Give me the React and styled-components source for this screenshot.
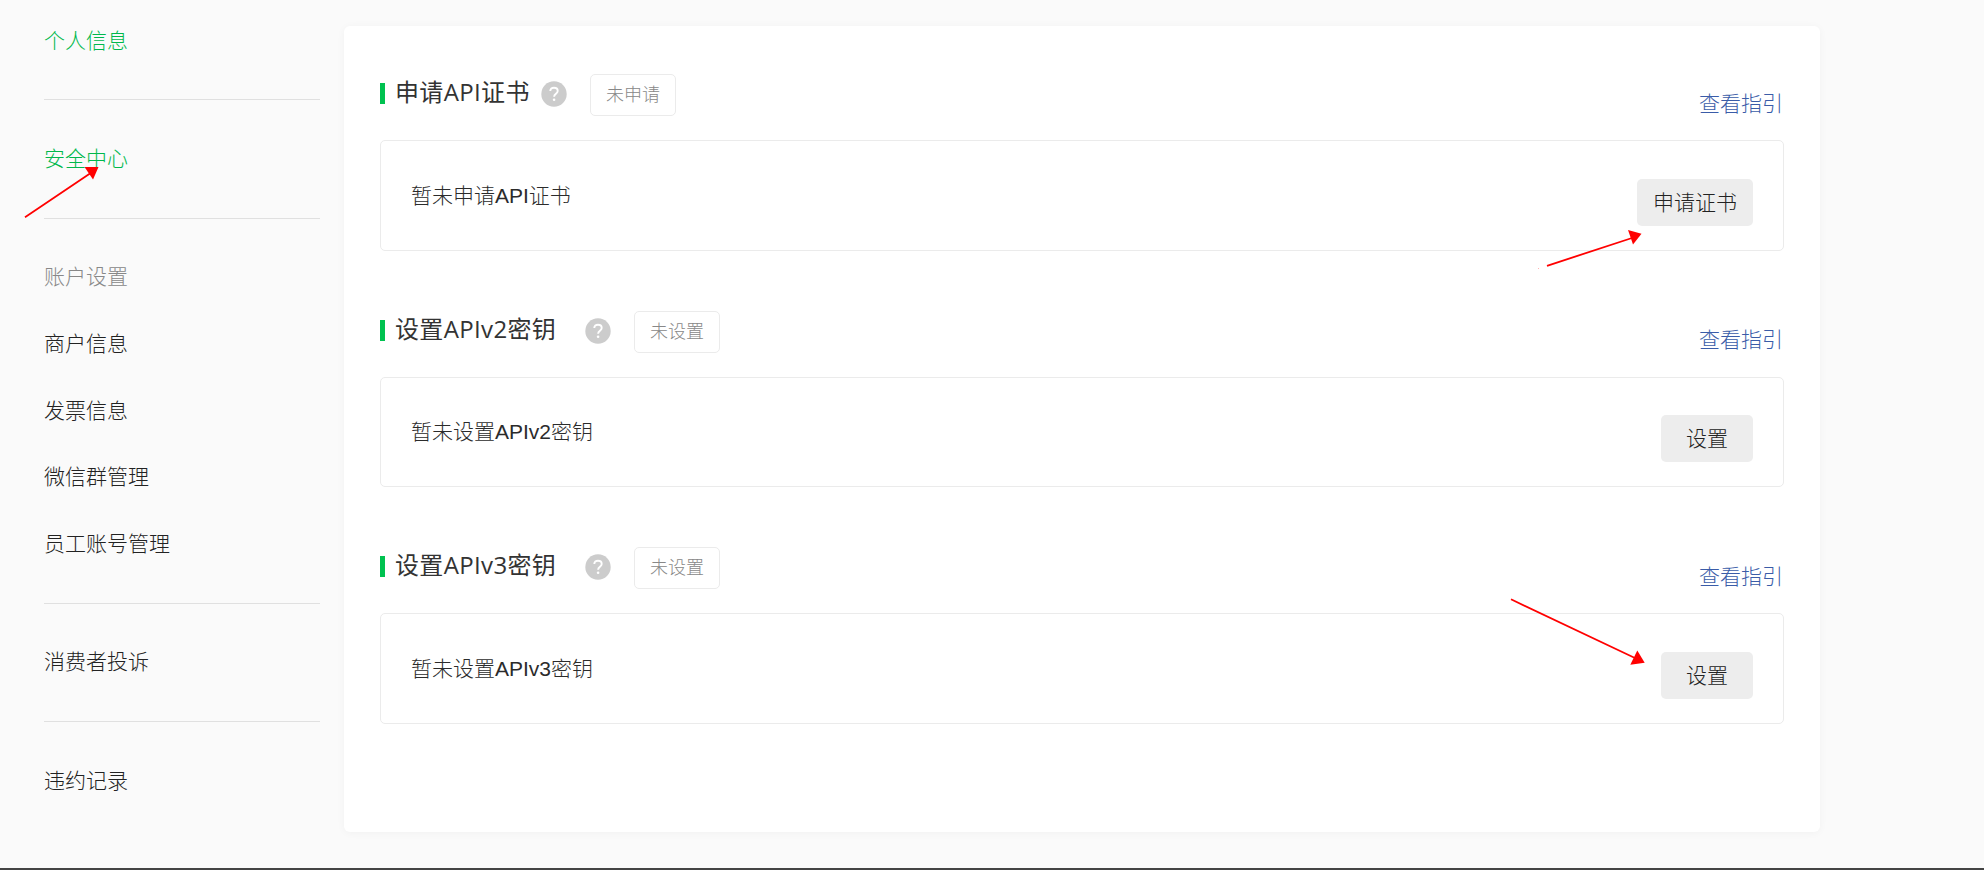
import styled, { createGlobalStyle } from 'styled-components';

const menuGroups = [
  [{ label: '个人信息', color: '#00b84c' }],
  [{ label: '安全中心', color: '#00b84c' }],
  [
    { label: '账户设置', color: '#888' },
    { label: '商户信息' },
    { label: '发票信息' },
    { label: '微信群管理' },
    { label: '员工账号管理' },
  ],
  [{ label: '消费者投诉' }],
  [{ label: '违约记录' }],
];

const sections = [
  {
    title: '申请API证书',
    titleWidth: 146,
    status: '未申请',
    content: '暂未申请API证书',
    action: '申请证书',
    actionWidth: 116,
  },
  {
    title: '设置APIv2密钥',
    titleWidth: 190,
    status: '未设置',
    content: '暂未设置APIv2密钥',
    action: '设置',
    actionWidth: 92,
  },
  {
    title: '设置APIv3密钥',
    titleWidth: 190,
    status: '未设置',
    content: '暂未设置APIv3密钥',
    action: '设置',
    actionWidth: 92,
  },
];

export default function App() {
  return (
    <Page>
      <GlobalStyle />
      <Sidebar>
        {menuGroups.map((group) => (
          <MenuGroup key={group[0].label}>
            {group.map((item) => (
              <MenuItem key={item.label} $color={item.color}>
                {item.label}
              </MenuItem>
            ))}
          </MenuGroup>
        ))}
      </Sidebar>
      <Card>
        {sections.map((section) => (
          <Section key={section.title}>
            <SectionHeader>
              <TitleBar />
              <Title $width={section.titleWidth}>{section.title}</Title>
              <HelpIcon />
              <Status>{section.status}</Status>
              <GuideLink>查看指引</GuideLink>
            </SectionHeader>
            <Panel>
              <PanelText>{section.content}</PanelText>
              <ActionButton $width={section.actionWidth}>
                {section.action}
              </ActionButton>
            </Panel>
          </Section>
        ))}
      </Card>
      <Arrows />
    </Page>
  );
}

function HelpIcon() {
  return (
    <HelpSvg viewBox="0 0 26 26">
      <circle cx="13" cy="13" r="12.7" fill="#ccc" />
      <path
        d="M9.3 10.1C9.3 7.9 10.8 6.7 13 6.7s3.7 1.2 3.7 3.2c0 2.8-3.6 2.9-3.6 5.8"
        fill="none"
        stroke="#fff"
        strokeWidth="1.9"
      />
      <circle cx="13.1" cy="18.7" r="1.3" fill="#fff" />
    </HelpSvg>
  );
}

function Arrows() {
  return (
    <ArrowLayer viewBox="0 0 1984 870">
      <path d="M25 217.3L90 173.5M1547 265.8L1632 238M1511 599.3L1636 658.5" />
      <polygon points="84.5,167 98.5,167 93,179.5" />
      <polygon points="1628,230 1641.5,233.7 1633,244.5" />
      <polygon points="1637.3,650.5 1644.7,662.8 1630.3,664.7" />
      <circle cx="1538.5" cy="268.5" r="0.5" />
    </ArrowLayer>
  );
}

const GlobalStyle = createGlobalStyle`
  * {
    box-sizing: border-box;
  }

  body {
    margin: 0;
    background: #fafafa;
    color: #2b2b2b;
    font-family: 'Liberation Sans', 'Noto Sans CJK SC', sans-serif;
    font-size: 21px;
    font-weight: 300;
    line-height: 28px;
  }
`;

const Page = styled.div`
  position: relative;
  display: flex;
  align-items: flex-start;
  gap: 24px;
  height: 870px;
  padding-left: 44px;
  overflow: hidden;
  border-bottom: 2px solid #444;
`;

const Sidebar = styled.nav`
  width: 276px;
  margin-top: -17.9px;
`;

const MenuGroup = styled.ul`
  display: flex;
  flex-direction: column;
  gap: 38.7px;
  margin: 0;
  padding: 44.5px 0 44.8px;
  list-style: none;

  & + & {
    border-top: 1px solid #e0e0e0;
  }
`;

const MenuItem = styled.li`
  color: ${({ $color }) => $color || '#222'};
`;

const Card = styled.main`
  display: flex;
  flex-direction: column;
  gap: 59.6px;
  width: 1476px;
  height: 806px;
  margin-top: 26px;
  padding: 48.3px 36px;
  background: #fff;
  border-radius: 6px;
  box-shadow: 0 1px 8px rgba(0, 0, 0, 0.04);
`;

const Section = styled.section`
  display: flex;
  flex-direction: column;
  gap: 24px;
`;

const SectionHeader = styled.header`
  display: flex;
  align-items: center;
  height: 42px;
`;

const TitleBar = styled.span`
  width: 5px;
  height: 21px;
  margin: 0 10px 3px 0;
  background: #00c250;
`;

const Title = styled.h2`
  width: ${({ $width }) => $width}px;
  margin: 0 0 6px;
  color: #333;
  font-family: 'Open Sans', 'Noto Sans CJK SC', sans-serif;
  font-size: 24px;
  font-weight: 400;
  line-height: 36px;
  letter-spacing: 0.35px;
  white-space: nowrap;
`;

const HelpSvg = styled.svg`
  width: 26px;
  height: 26px;
  margin: 0 23px 2px 0;
`;

const Status = styled.span`
  width: 86px;
  height: 42px;
  border: 1px solid #ebebeb;
  border-radius: 5px;
  color: #888;
  font-size: 18px;
  line-height: 40px;
  text-align: center;
`;

const GuideLink = styled.a`
  margin: 17px 1px 0 auto;
  color: #3a5ca8;
`;

const Panel = styled.div`
  display: flex;
  justify-content: space-between;
  height: 110.8px;
  padding: 37.6px 30px 0;
  border: 1px solid #ebebeb;
  border-radius: 5px;
`;

const PanelText = styled.p`
  margin: 3px 0 0;
`;

const ActionButton = styled.button`
  width: ${({ $width }) => $width}px;
  height: 47px;
  padding: 1px 0 0;
  background: #ededed;
  border: none;
  border-radius: 5px;
  color: #222;
  font: inherit;
`;

const ArrowLayer = styled.svg`
  position: absolute;
  top: 0;
  left: 0;
  width: 1984px;
  height: 870px;
  pointer-events: none;

  path {
    stroke: #f00;
    stroke-width: 1.8;
  }

  polygon {
    fill: #f00;
  }

  circle {
    fill: #f99;
  }
`;
